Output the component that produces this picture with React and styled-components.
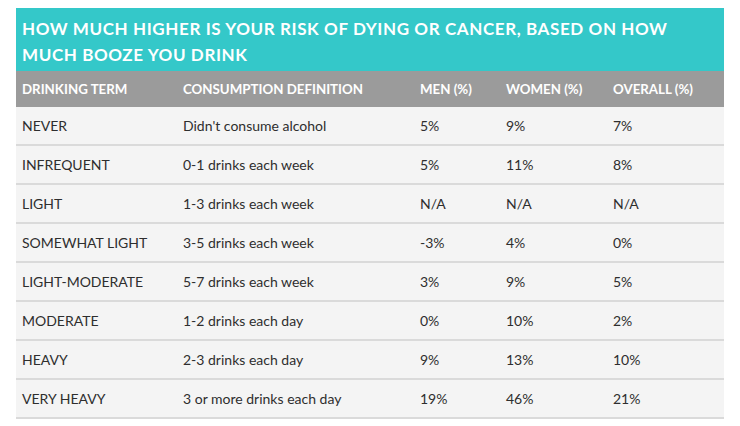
import React from 'react';
import styled, { createGlobalStyle } from 'styled-components';

const GlobalStyle = createGlobalStyle`
  body {
    margin: 0;
    background: #fff;
    font-family: Lato, "Open Sans", sans-serif;
  }
`;

const Wrapper = styled.div`
  width: 708px;
  margin: 8px 0 0 16px;
`;

const Title = styled.h2`
  margin: 0;
  padding: 8px 20px 3px 6px;
  background: #34c8c9;
  color: #fff;
  font-size: 17px;
  line-height: 26px;
  font-weight: 700;
  letter-spacing: 0.6px;
  text-transform: uppercase;
`;

const Row = styled.div`
  display: grid;
  grid-template-columns: 161px 237px 86px 107px 1fr;
  align-items: center;
  height: ${props => (props.head ? '36px' : '37px')};
  background: ${props => (props.head ? '#9b9b9b' : '#f4f4f4')};
  border-bottom: ${props => (props.head ? 'none' : '2px solid #dadada')};
`;

const Cell = styled.div`
  padding-left: 6px;
  font-size: ${props => (props.head ? '13.3px' : '14px')};
  color: ${props => (props.head ? '#fff' : '#2e2e2e')};
  font-weight: ${props => (props.head ? 700 : 400)};
`;

const columns = ['Drinking term', 'Consumption definition', 'Men (%)', 'Women (%)', 'Overall (%)'];

const rows = [
  ['NEVER', "Didn't consume alcohol", '5%', '9%', '7%'],
  ['INFREQUENT', '0-1 drinks each week', '5%', '11%', '8%'],
  ['LIGHT', '1-3 drinks each week', 'N/A', 'N/A', 'N/A'],
  ['SOMEWHAT LIGHT', '3-5 drinks each week', '-3%', '4%', '0%'],
  ['LIGHT-MODERATE', '5-7 drinks each week', '3%', '9%', '5%'],
  ['MODERATE', '1-2 drinks each day', '0%', '10%', '2%'],
  ['HEAVY', '2-3 drinks each day', '9%', '13%', '10%'],
  ['VERY HEAVY', '3 or more drinks each day', '19%', '46%', '21%'],
];

const App = () => (
  <>
    <GlobalStyle />
    <Wrapper>
      <Title>How much higher is your risk of dying or cancer, based on how much booze you drink</Title>
      <Row head>
        {columns.map(c => (
          <Cell head key={c}>
            {c.toUpperCase()}
          </Cell>
        ))}
      </Row>
      {rows.map(r => (
        <Row key={r[0]}>
          {r.map((v, i) => (
            <Cell key={i}>{v}</Cell>
          ))}
        </Row>
      ))}
    </Wrapper>
  </>
);

export default App;
